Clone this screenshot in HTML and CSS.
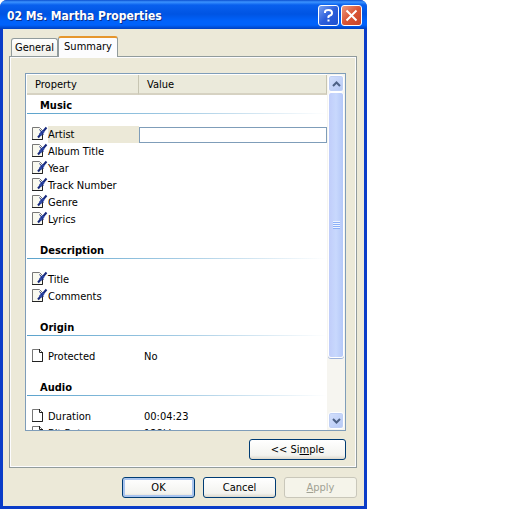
FILE: index.html
```html
<!DOCTYPE html>
<html lang="en">
  <head>
    <title>02 Ms. Martha Properties</title>
    <meta charset="utf-8" />
    <link rel="stylesheet" href="styles.css">
  </head>
  <body>
    <!-- icons shared by the property rows -->
    <svg class="sprite" aria-hidden="true">
      <symbol id="page" viewBox="0 0 16 14">
        <path d="M.5 1.500h7l3 3v9H.5z" fill="#fff" stroke="#777"/>
        <path d="M10.500 4v9.500H0M7.500 1v3.500h3.500" fill="none" stroke="#222"/>
      </symbol>
      <symbol id="edit" viewBox="0 0 16 14">
        <path d="M.5 1.500h7l3 3v9H.5z" fill="#f9f9f0" stroke="#777"/>
        <path d="M10.500 8v5.500H0" fill="none" stroke="#222"/>
        <path d="M14.500 1.500L6 11.500" stroke="#17297c" stroke-width="2"/>
        <path d="M11.500 5L8 9" stroke="#2f49a8" stroke-width="3"/>
        <path d="M7.500 3.500l4 5" fill="none" stroke="#17297c"/>
      </symbol>
    </svg>

    <div class="dialog">
      <div class="titlebar">
        <h1>02 Ms. Martha Properties</h1>
        <button class="caption help" aria-label="Help">
          <svg viewBox="0 0 19 19"><path d="M6 7V6q0-2 3.500-2T13 7q0 2-2 2.500T9.500 12M9.500 13.500v2" fill="none" stroke="#fff" stroke-width="2"/></svg>
        </button>
        <button class="caption close" aria-label="Close">
          <svg viewBox="0 0 19 19"><path d="M4.500 4.500l10 10M14.500 4.500l-10 10" stroke="#fff" stroke-width="2"/></svg>
        </button>
      </div>

      <div class="content">
        <div class="tabs" role="tablist">
          <button class="tab" role="tab">General</button>
          <button class="tab active" role="tab" aria-selected="true">Summary</button>
        </div>

        <div class="panel" role="tabpanel">
          <div class="list">
            <div class="viewport">
              <table>
                <colgroup><col class="name-col"><col></colgroup>
                <thead>
                  <tr><th>Property</th><th>Value</th></tr>
                </thead>
                <tbody>
                  <tr class="group first"><th colspan="2"><div>Music</div></th></tr>
                  <tr class="selected">
                    <td><div class="name"><svg><use href="#edit"/></svg><label for="artist">Artist</label></div></td>
                    <td class="editing"><input id="artist" type="text"></td>
                  </tr>
                  <tr><td><div class="name"><svg><use href="#edit"/></svg><span>Album Title</span></div></td><td></td></tr>
                  <tr><td><div class="name"><svg><use href="#edit"/></svg><span>Year</span></div></td><td></td></tr>
                  <tr><td><div class="name"><svg><use href="#edit"/></svg><span>Track Number</span></div></td><td></td></tr>
                  <tr><td><div class="name"><svg><use href="#edit"/></svg><span>Genre</span></div></td><td></td></tr>
                  <tr><td><div class="name"><svg><use href="#edit"/></svg><span>Lyrics</span></div></td><td></td></tr>
                </tbody>
                <tbody>
                  <tr class="group"><th colspan="2"><div>Description</div></th></tr>
                  <tr><td><div class="name"><svg><use href="#edit"/></svg><span>Title</span></div></td><td></td></tr>
                  <tr><td><div class="name"><svg><use href="#edit"/></svg><span>Comments</span></div></td><td></td></tr>
                </tbody>
                <tbody>
                  <tr class="group"><th colspan="2"><div>Origin</div></th></tr>
                  <tr><td><div class="name"><svg><use href="#page"/></svg><span>Protected</span></div></td><td>No</td></tr>
                </tbody>
                <tbody>
                  <tr class="group"><th colspan="2"><div>Audio</div></th></tr>
                  <tr><td><div class="name"><svg><use href="#page"/></svg><span>Duration</span></div></td><td>00:04:23</td></tr>
                  <tr><td><div class="name"><svg><use href="#page"/></svg><span>Bit Rate</span></div></td><td>128kbps</td></tr>
                </tbody>
              </table>
            </div>
            <div class="scrollbar">
              <button class="arrow" aria-label="Scroll up">
                <svg viewBox="0 0 9 6"><path d="M1 5l3.500-3.500L8 5" fill="none" stroke="#4d6185" stroke-width="2"/></svg>
              </button>
              <div class="track">
                <div class="thumb"><span class="grip"></span></div>
              </div>
              <button class="arrow" aria-label="Scroll down">
                <svg viewBox="0 0 9 6"><path d="M1 1l3.500 3.500L8 1" fill="none" stroke="#4d6185" stroke-width="2"/></svg>
              </button>
            </div>
          </div>
          <button class="btn simple">&lt;&lt; Si<u>m</u>ple</button>
        </div>

        <div class="actions">
          <button class="btn default">OK</button>
          <button class="btn">Cancel</button>
          <button class="btn" disabled><u>A</u>pply</button>
        </div>
      </div>
    </div>
  </body>
</html>
```
FILE: styles.css
```css
* {
  box-sizing: border-box;
}

body {
  margin: 0;
  padding-right: 145px;
  background: #fff;
  color: #000;
  font: 11px/17px Tahoma, "DejaVu Sans Condensed", "DejaVu Sans", sans-serif;
}

button,
input {
  font: inherit;
  color: inherit;
  margin: 0;
  padding: 0;
}

.sprite {
  display: none;
}

.dialog {
  display: flex;
  flex-direction: column;
  height: 100vh;
  background: #0a3cc8;
  border-radius: 7px 7px 0 0;
}

/* title bar */
.titlebar {
  display: flex;
  align-items: center;
  gap: 2px;
  height: 29px;
  padding: 2px 5px 0 7px;
  border-radius: 7px 7px 0 0;
  background: linear-gradient(#0a4fd0, #3b93ff 2px, #0860ee 5px, #0054e3 14px, #0062fb 21px, #0062fb 25px, #0040c0);
}

.titlebar h1 {
  flex: 1;
  margin: 0;
  color: #fff;
  font: bold 13px/20px "Trebuchet MS", "DejaVu Sans Condensed", sans-serif;
  font-size: 12px;
  text-shadow: 1px 1px #0a2f8c;
}

.caption {
  width: 21px;
  height: 21px;
  border: 1px solid #fff;
  border-radius: 3px;
}

.caption svg {
  display: block;
}

.help {
  background: linear-gradient(135deg, #7ba2f0, #2c5edb 50%, #1c50d0);
}

.close {
  background: linear-gradient(135deg, #eb9a80, #da5535 50%, #c8452a);
}

.content {
  flex: 1;
  min-height: 0;
  display: flex;
  flex-direction: column;
  margin: 0 3px 3px;
  padding: 7px 7px 8px 6px;
  background: #ece9d8;
}

/* tabs */
.tabs {
  display: flex;
  align-items: flex-end;
  height: 21px;
  padding-left: 2px;
  margin-bottom: -1px;
  z-index: 1;
}

.tab {
  width: 47px;
  height: 18px;
  margin-bottom: 1px;
  border: 1px solid #919b9c;
  border-width: 1px 1px 0;
  border-radius: 3px 3px 0 0;
  background: linear-gradient(#fff, #f0f0ea);
}

.tab.active {
  width: 60px;
  height: 21px;
  margin-bottom: 0;
  padding-bottom: 2px;
  border-top: 2px solid #e6962c;
  background: #fcfcfe;
}

.panel {
  flex: 1;
  min-height: 0;
  display: flex;
  flex-direction: column;
  gap: 8px;
  padding: 16px 10px 7px 15px;
  border: 1px solid #919b9c;
  box-shadow: inset 1px 1px #fcfcfe, inset -1px -1px #fcfcfe;
}

/* property list */
.list {
  flex: 1;
  min-height: 0;
  display: flex;
  border: 1px solid #7f9db9;
  background: #fff;
}

.viewport {
  flex: 1;
  overflow: hidden;
  padding: 1px 0 0 1px;
}

table {
  width: 100%;
  table-layout: fixed;
  border-spacing: 0;
}

.name-col {
  width: 112px;
}

th,
td {
  height: 17px;
  padding: 0;
  text-align: left;
}

thead th {
  height: 20px;
  padding: 1px 0 0 8px;
  border-bottom: 2px solid #d6d2c2;
  border-right: 1px solid #c7c5b2;
  background: #ebeadb;
  font-weight: normal;
}

.group th {
  padding: 13px 0 12px;
}

.group.first th {
  padding-top: 1px;
}

.group div {
  height: 18px;
  padding: 1px 0 0 13px;
  background: linear-gradient(90deg, #5ba3cc, #a3cbe4 50%, #fff) bottom / 100% 1px no-repeat;
}

td + td {
  padding-left: 5px;
}

.name {
  display: flex;
  height: 17px;
}

.name svg {
  flex: none;
  width: 16px;
  height: 14px;
  margin-left: 5px;
}

.name span,
.name label {
  flex: 1;
}

.selected label {
  background: #ece9d8;
}

td.editing {
  padding: 0;
}

.editing input {
  display: block;
  width: 100%;
  height: 16px;
  padding: 0 4px;
  border: 1px solid #7f9db9;
  outline: none;
}

/* scroll bar */
.scrollbar {
  display: flex;
  flex-direction: column;
  width: 18px;
  padding: 1px;
  background: #f6f5f0;
}

.arrow {
  display: flex;
  align-items: center;
  justify-content: center;
  height: 17px;
  border: 1px solid #fff;
  border-radius: 3px;
  background: linear-gradient(135deg, #d4e0fc, #b5c8f5);
  box-shadow: inset 0 0 0 1px #c0d0f5;
}

.arrow svg {
  width: 9px;
  height: 6px;
}

.track {
  flex: 1;
}

.thumb {
  display: flex;
  align-items: center;
  justify-content: center;
  height: 83%;
  border: 1px solid #fff;
  border-radius: 3px;
  background: linear-gradient(90deg, #c0cdfa, #c8d8fd 50%, #b5c8f8);
  box-shadow: 0 1px #9db2dc;
}

.grip {
  width: 7px;
  height: 8px;
  background: repeating-linear-gradient(#eef4fe 0 1px, #8cb0f8 1px 2px);
}

/* buttons */
.btn {
  width: 73px;
  height: 21px;
  border: 1px solid #003c74;
  border-radius: 3px;
  background: linear-gradient(#fff, #f3f3ef 80%, #dcd8cc);
}

.simple {
  align-self: flex-end;
  width: 97px;
}

.default {
  box-shadow: inset 0 0 0 2px #a9c4ee;
}

.btn:disabled {
  border-color: #c9c7ba;
  background: #f5f4ea;
  color: #a1a192;
}

.actions {
  display: flex;
  justify-content: flex-end;
  gap: 8px;
  padding-top: 9px;
}
```
